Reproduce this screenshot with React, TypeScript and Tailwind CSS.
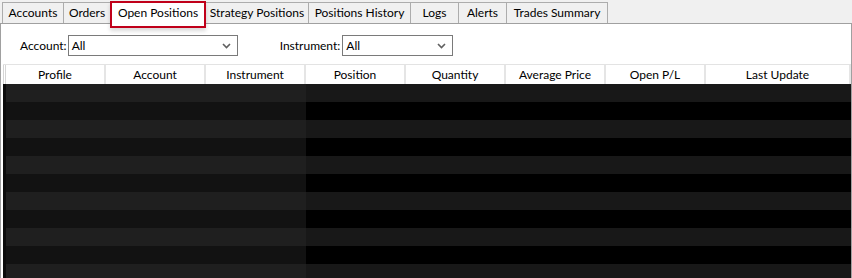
import React from "react";

const tabs = [
  { label: "Accounts", w: 62 },
  { label: "Orders", w: 48 },
  { label: "Open Positions", w: 96, active: true },
  { label: "Strategy Positions", w: 104 },
  { label: "Positions History", w: 103 },
  { label: "Logs", w: 49 },
  { label: "Alerts", w: 49 },
  { label: "Trades Summary", w: 102 },
];

const columns = [
  { label: "Profile", w: 100 },
  { label: "Account", w: 100 },
  { label: "Instrument", w: 100 },
  { label: "Position", w: 100 },
  { label: "Quantity", w: 100 },
  { label: "Average Price", w: 100 },
  { label: "Open P/L", w: 100 },
  { label: "Last Update", w: 145 },
];

function Select({ width }: { width: string }) {
  return (
    <div className={`${width} shrink-0 h-[21px] border border-[#7a7a7a] bg-white flex items-center justify-between pl-[3px] pr-[6px]`}>
      <span>All</span>
      <svg width="9" height="6" viewBox="0 0 9 6">
        <path d="M1 1 L4.5 4.5 L8 1" stroke="#606060" strokeWidth="1.6" fill="none" />
      </svg>
    </div>
  );
}

export default function App() {
  const rows = Array.from({ length: 11 }, (_, i) => i);

  return (
    <div className="w-[852px] h-[278px] overflow-hidden bg-white text-[12px] text-black font-['Lato','Liberation_Sans',sans-serif] leading-none whitespace-nowrap">
      {/* tab strip */}
      <div className="h-[24px] shrink-0 bg-[#f0f0f0] border-b border-[#a0a0a0] flex items-end pl-[2px] relative">
        {tabs.map(t =>
          t.active ? (
            <div
              key={t.label}
              style={{ width: t.w }}
              className="relative z-10 shrink-0 h-[27px] -mb-[5px] -ml-px bg-white border-2 border-[#c0001a] flex items-start justify-center pt-[4px] shadow-[0_3px_4px_rgba(0,0,0,0.15)]"
            >
              {t.label}
            </div>
          ) : (
            <div
              key={t.label}
              style={{ width: t.w }}
              className="shrink-0 h-[21px] bg-[#f0f0f0] border border-b-0 border-[#acacac] -ml-px first:ml-0 flex items-center justify-center"
            >
              {t.label}
            </div>
          )
        )}
      </div>

      <div className="h-[254px] border-x border-[#a0a0a0] flex flex-col">
        {/* filters */}
        <div className="h-[40px] shrink-0 flex items-center pt-[3px]">
          <span className="ml-[19px] mr-[1px]">Account:</span>
          <Select width="w-[170px]" />
          <span className="ml-[42px] mr-[2px]">Instrument:</span>
          <Select width="w-[111px]" />
        </div>

        {/* grid */}
        <div className="flex-1 ml-[2px] flex flex-col">
          <div className="h-[20px] shrink-0 flex border-t border-[#e3e3e3] bg-white">
            <div className="w-[5px] border-x border-[#d5d5d5]" />
            {columns.map(c => (
              <div
                key={c.label}
                style={{ width: c.w }}
                className="shrink-0 border-r-[2px] border-[#e5e5e5] flex items-center justify-center"
              >
                {c.label}
              </div>
            ))}
          </div>
          {rows.map(i => (
            <div key={i} className="h-[18px] flex shrink-0">
              <div className="w-[3px] bg-[#0b0b0b]" />
              <div className={`w-[300px] ${i % 2 === 0 ? "bg-[#1f1f1f]" : "bg-[#121212]"}`} />
              <div className={`flex-1 ${i % 2 === 0 ? "bg-[#181818]" : "bg-black"}`} />
            </div>
          ))}
        </div>
      </div>
    </div>
  );
}
